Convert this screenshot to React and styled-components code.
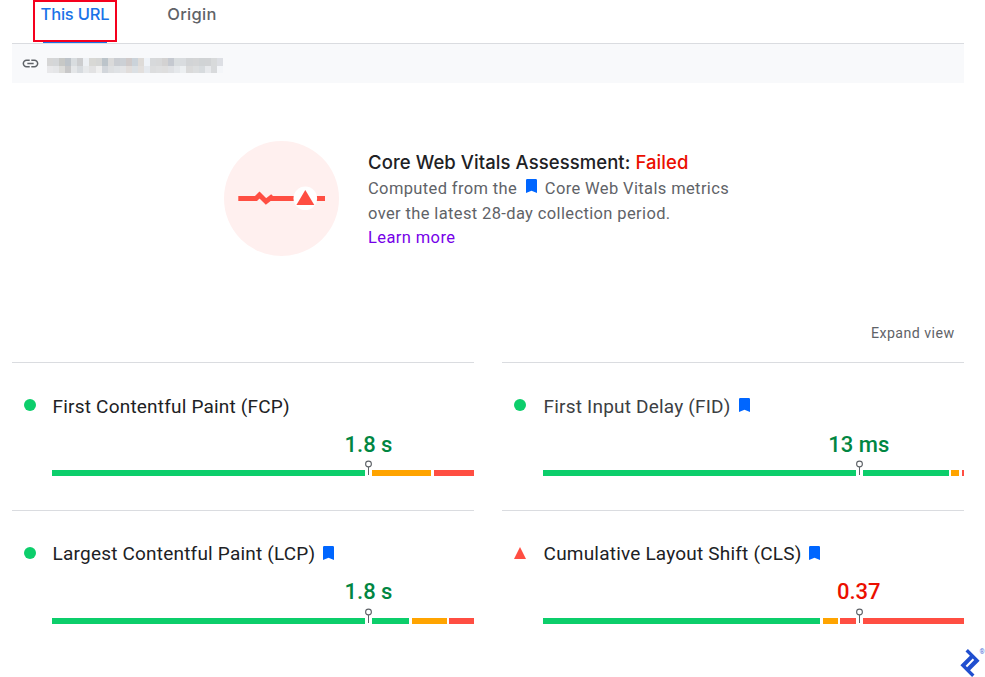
import React from 'react';
import styled, { createGlobalStyle } from 'styled-components';
import { SiToptal } from 'react-icons/si';

const GlobalStyle = createGlobalStyle`
  * {
    box-sizing: border-box;
  }

  body {
    margin: 0;
    background: white;
    font-family: Roboto, 'Liberation Sans', sans-serif;
    color: #202124;
    overflow: hidden;
  }
`;

const colors = {
  good: '#0cce6b',
  average: '#ffa400',
  poor: '#ff4e42',
  goodText: '#018642',
  poorText: '#eb0f00',
};

const Page = styled.div`
  position: relative;
  width: 985px;
  height: 677px;
  padding: 0 21px 0 12px;
  overflow: hidden;
`;

const Tabs = styled.div`
  display: flex;
  height: 44px;
  padding-left: 21px;
  border-bottom: 1px solid #dadce0;
`;

const Tab = styled.div`
  position: relative;
  display: flex;
  justify-content: center;
  width: ${({ $wide }) => ($wide ? '150px' : '84px')};
  height: 42px;
  border: 2px solid ${({ $marked }) => ($marked ? '#f5001d' : 'transparent')};
  font-family: Inter, Roboto, sans-serif;
  font-size: 16.5px;
  line-height: 24px;
  font-weight: 500;
  letter-spacing: ${({ $marked }) => ($marked ? '-0.2px' : '0.3px')};
  color: ${({ $marked }) => ($marked ? '#1a73e8' : '#5f6368')};
  white-space: nowrap;
`;

const Indicator = styled.div`
  position: absolute;
  left: 8px;
  bottom: -3px;
  width: 64px;
  height: 1px;
  background: #1a73e8;
`;

const UrlBar = styled.div`
  display: flex;
  align-items: center;
  height: 39px;
  padding-left: 9px;
  gap: 7px;
  background: #f8f9fb;
`;

const Mosaic = styled.div`
  display: grid;
  grid-template-columns: repeat(29, 6.07px);
  grid-template-rows: 8px 7px;
  margin-top: 4px;
`;

const MosaicCell = styled.div`
  background: ${({ $shade }) => $shade};
`;

const Assessment = styled.div`
  display: flex;
  gap: 29px;
  height: 115px;
  margin: 58px 0 0 212px;
`;

const AssessmentText = styled.div`
  padding-top: 9px;
  white-space: nowrap;
`;

const Heading = styled.div`
  font-family: Inter, Roboto, sans-serif;
  font-size: 18.5px;
  line-height: 24px;
  font-weight: 500;
  letter-spacing: 0.07px;
`;

const Failed = styled.span`
  color: ${colors.poorText};
`;

const Description = styled.div`
  padding-top: 2px;
  font-size: 16.5px;
  line-height: 25px;
  letter-spacing: 0.37px;
  color: #5f6368;
`;

const LearnMore = styled.div`
  font-size: 16.5px;
  line-height: 24px;
  letter-spacing: 0.39px;
  color: #7600e8;
`;

const InlineBookmark = styled.span`
  display: inline-block;
  margin: 0 8.3px;
  line-height: 1;
  vertical-align: 1px;
`;

const Expand = styled.div`
  height: 106px;
  padding: 67px 9.5px 0 0;
  font-size: 14.2px;
  line-height: 20px;
  letter-spacing: 0.45px;
  text-align: right;
  color: #5f6368;
`;

const Metrics = styled.div`
  display: grid;
  grid-template-columns: 462px 462px;
  grid-template-rows: 148px 148px;
  column-gap: 28px;
`;

const Metric = styled.div`
  display: grid;
  grid-template-columns: ${({ $indent }) => $indent}px 1fr;
  grid-template-rows: 107px 6px;
  border-top: 1px solid #dadce0;
`;

const Status = styled.div`
  padding: 36px 0 0 12px;
  line-height: 0;
`;

const MetricBody = styled.div`
  padding-top: ${({ $raised }) => ($raised ? '31px' : '32px')};
`;

const MetricTitle = styled.div`
  display: flex;
  gap: 8px;
  padding-left: 0.6px;
  font-size: 19px;
  line-height: 24px;
  letter-spacing: 0.2px;
  white-space: nowrap;
  color: ${({ $muted }) => ($muted ? '#3c4043' : '#202124')};
`;

const TitleBookmark = styled.span`
  padding-top: ${({ $raised }) => ($raised ? '4px' : '3px')};
  line-height: 0;
`;

const MetricValue = styled.div`
  width: 150%;
  margin-top: 12px;
  font-size: 22px;
  line-height: 28px;
  font-weight: 500;
  text-align: center;
  color: ${({ $poor }) => ($poor ? colors.poorText : colors.goodText)};
`;

const Distribution = styled.div`
  position: relative;
  grid-column: 2;
  display: flex;
  justify-content: space-between;
`;

const Segment = styled.div`
  width: ${({ $width }) => $width}px;
  background: ${({ $tone }) => colors[$tone]};
`;

const Pin = styled.svg`
  position: absolute;
  left: 75.1%;
  top: -10px;
  width: 7px;
  height: 16px;
  margin-left: -3.5px;
`;

const Logo = styled.div`
  position: absolute;
  left: 956px;
  top: 649px;
  display: flex;
  color: #204ecf;
`;

const Registered = styled.span`
  margin-left: -4.5px;
  font-size: 6.5px;
  line-height: 6px;
  opacity: 0.8;
`;

const upperShades = [
  '#d6d6d6', '#d4d6d8', '#c7c8c6', '#bdc3c9', '#d8dcdf', '#cccdcf', '#edf0f4', '#d8d8d5',
  '#d5d6d5', '#bcc4ca', '#dadada', '#cacdd2', '#ccd0d5', '#cfcaca', '#cbd3da', '#dedbd8',
  '#eff3f8', '#d7d9db', '#d7d8d9', '#d3d2d2', '#c5c9d0', '#d9dddf', '#d9dcdf', '#d2d4d6',
  '#d4d5d6', '#d0d3d5', '#d1d3d5', '#d8dadb', '#dddfe4',
];

const lowerShades = [
  '#e8e8ea', '#e5e6e8', '#dcdcda', '#c8c8c9', '#e4e6e8', '#d7dbdf', '#e7e9eb', '#e2e2e3',
  '#efefef', '#d2d6db', '#dddfe1', '#dfe2e5', '#e3e4e6', '#e1dddb', '#dbe0e4', '#e2dfdd',
  '#e5e9ee', '#dcddde', '#dedfe0', '#dedede', '#dfe1e4', '#e5e8eb', '#eceff1', '#dadada',
  '#dcdedf', '#d7dbde', '#e7e9ec', '#d8dadc', '#f4f6f9',
];

const metrics = [
  {
    title: 'First Contentful Paint (FCP)',
    value: '1.8 s',
    segments: [317, 59, 40],
  },
  {
    title: 'First Input Delay (FID)',
    value: '13 ms',
    segments: [405.6, 8, 2.4],
    vital: true,
    muted: true,
  },
  {
    title: 'Largest Contentful Paint (LCP)',
    value: '1.8 s',
    segments: [357, 35, 25],
    vital: true,
  },
  {
    title: 'Cumulative Layout Shift (CLS)',
    value: '0.37',
    segments: [277, 15, 124],
    vital: true,
    poor: true,
  },
];

const tones = ['good', 'average', 'poor'];

function LinkIcon() {
  return (
    <svg width="19" height="19" viewBox="0 0 24 24" fill="#5f6368">
      <path d="M3.9 12c0-1.71 1.39-3.1 3.1-3.1h4V7H7c-2.76 0-5 2.24-5 5s2.24 5 5 5h4v-1.9H7c-1.71 0-3.1-1.39-3.1-3.1zM8 13h8v-2H8v2zm9-6h-4v1.9h4c1.71 0 3.1 1.39 3.1 3.1s-1.39 3.1-3.1 3.1h-4V17h4c2.76 0 5-2.24 5-5s-2.24-5-5-5z" />
    </svg>
  );
}

function Bookmark() {
  return (
    <svg width="11" height="14" viewBox="0 0 11 14" fill="#0066ff">
      <path d="M1.2 0h8.6Q11 0 11 1.2V14L5.5 11.7L0 14V1.2Q0 0 1.2 0z" />
    </svg>
  );
}

function VitalsGraphic() {
  return (
    <svg width="115" height="115" viewBox="0 0 115 115">
      <circle cx="57.5" cy="57.5" r="57.5" fill="#fff0ef" />
      <path
        d="M14.3 57.5H32L35.5 54L42 60.5L47 56.5L48 57.5H101"
        fill="none"
        stroke="#ff4e42"
        strokeWidth="5"
      />
      <circle cx="81.3" cy="57.3" r="11.8" fill="white" />
      <path d="M81.3 49L90.3 64H72.4z" fill="#ff4e42" />
    </svg>
  );
}

function StatusIcon({ poor }) {
  return (
    <svg width="12" height="12" viewBox="0 0 12 12">
      {poor ? (
        <path d="M6 0L12 12H0z" fill={colors.poor} />
      ) : (
        <circle cx="6" cy="6" r="6" fill={colors.good} />
      )}
    </svg>
  );
}

function MetricCard({ title, value, segments, vital, muted, poor, raised, indent }) {
  return (
    <Metric $indent={indent}>
      <Status>
        <StatusIcon poor={poor} />
      </Status>
      <MetricBody $raised={raised}>
        <MetricTitle $muted={muted}>
          {title}
          {vital && (
            <TitleBookmark $raised={raised}>
              <Bookmark />
            </TitleBookmark>
          )}
        </MetricTitle>
        <MetricValue $poor={poor}>{value}</MetricValue>
      </MetricBody>
      <Distribution>
        {segments.map((width, i) => (
          <Segment key={tones[i]} $width={width} $tone={tones[i]} />
        ))}
        <Pin viewBox="0 0 7 16">
          <path d="M0 10h7v6H0z" fill="white" />
          <path d="M3.5 7v8" stroke="#5f6368" />
          <circle cx="3.5" cy="4" r="2.9" fill="white" stroke="#5f6368" strokeWidth="1.1" />
        </Pin>
      </Distribution>
    </Metric>
  );
}

export default function App() {
  return (
    <>
      <GlobalStyle />
      <Page>
        <Tabs>
          <Tab $marked>
            This URL
            <Indicator />
          </Tab>
          <Tab $wide>Origin</Tab>
        </Tabs>
        <UrlBar>
          <LinkIcon />
          <Mosaic>
            {[...upperShades, ...lowerShades].map((shade, i) => (
              <MosaicCell key={i} $shade={shade} />
            ))}
          </Mosaic>
        </UrlBar>

        <Assessment>
          <VitalsGraphic />
          <AssessmentText>
            <Heading>
              Core Web Vitals Assessment: <Failed>Failed</Failed>
            </Heading>
            <Description>
              Computed from the
              <InlineBookmark>
                <Bookmark />
              </InlineBookmark>
              Core Web Vitals metrics
              <br />
              over the latest 28-day collection period.
            </Description>
            <LearnMore>Learn more</LearnMore>
          </AssessmentText>
        </Assessment>

        <Expand>Expand view</Expand>

        <Metrics>
          {metrics.map((metric, i) => (
            <MetricCard
              key={metric.title}
              {...metric}
              raised={i > 1}
              indent={i % 2 ? 41 : 40}
            />
          ))}
        </Metrics>

        <Logo>
          <SiToptal size={28} />
          <Registered>®</Registered>
        </Logo>
      </Page>
    </>
  );
}
